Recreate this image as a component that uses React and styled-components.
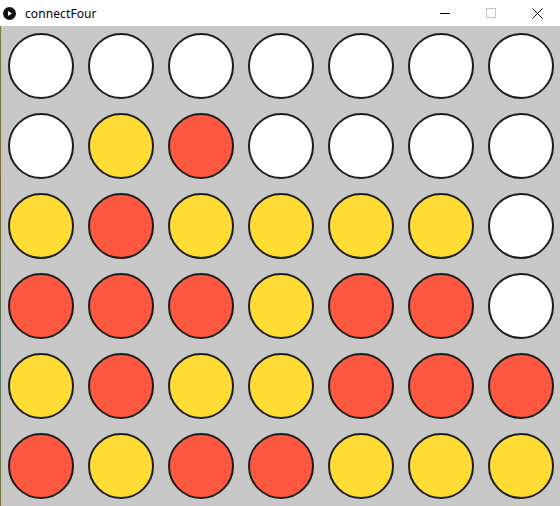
import React from "react";
import styled, { createGlobalStyle } from "styled-components";

const Global = createGlobalStyle`
  html, body { margin: 0; padding: 0; background: #ffffff; overflow: hidden; }
  body { font-family: "Segoe UI", "Noto Sans", "Open Sans", sans-serif; }
`;

const Window = styled.div`
  width: 560px;
  height: 506px;
  display: flex;
  flex-direction: column;
  background: #ffffff;
  overflow: hidden;
`;

const TitleBar = styled.div`
  height: 26px;
  flex: none;
  display: flex;
  align-items: center;
  background: #ffffff;
`;

const AppIcon = styled.svg`
  width: 13px;
  height: 13px;
  margin-left: 3px;
  margin-right: 9px;
  flex: none;
`;

const Title = styled.div`
  font-size: 12px;
  color: #000;
  flex: 1;
  letter-spacing: 0.1px;
`;

const Controls = styled.div`
  display: flex;
  height: 26px;
`;

const CtrlButton = styled.div`
  width: 46px;
  height: 26px;
  display: flex;
  align-items: center;
  justify-content: center;
`;

const Body = styled.div`
  flex: 1;
  display: flex;
`;

const Edge = styled.div`
  width: 1px;
  flex: none;
  background: linear-gradient(#6f7d3c, #7c6a2a 40%, #4f7a6a 70%, #7a7030);
`;

const Canvas = styled.div`
  width: 560px;
  height: 480px;
  flex: none;
  background: #c8c8c8;
  display: grid;
  grid-template-columns: repeat(7, 80px);
  grid-template-rows: repeat(6, 80px);
`;

const Cell = styled.div`
  display: flex;
  align-items: center;
  justify-content: center;
`;

const colors = { W: "#ffffff", Y: "#ffdc33", R: "#ff5841" };

const Disc = styled.div`
  width: 66px;
  height: 66px;
  box-sizing: border-box;
  border-radius: 50%;
  border: 2px solid #1e1e1e;
  background: ${(p) => colors[p.$c]};
`;

const board = [
  "WWWWWWW",
  "WYRWWWW",
  "YRYYYYW",
  "RRRYRRW",
  "YRYYRRR",
  "RYRRYYY",
];

export default function App() {
  return (
    <>
      <Global />
      <Window>
        <TitleBar>
          <AppIcon viewBox="0 0 13 13">
            <circle cx="6.5" cy="6.5" r="6.5" fill="#111" />
            <path d="M5 4 L9 6.5 L5 9 Z" fill="#fff" />
          </AppIcon>
          <Title>connectFour</Title>
          <Controls>
            <CtrlButton>
              <svg width="10" height="10" viewBox="0 0 10 10">
                <path d="M0 5.5 H10" stroke="#000" strokeWidth="1" />
              </svg>
            </CtrlButton>
            <CtrlButton>
              <svg width="10" height="10" viewBox="0 0 10 10">
                <rect x="0.5" y="0.5" width="9" height="9" fill="none" stroke="#c4c4c4" strokeWidth="1" />
              </svg>
            </CtrlButton>
            <CtrlButton>
              <svg width="11" height="11" viewBox="0 0 11 11">
                <path d="M0.5 0.5 L10.5 10.5 M10.5 0.5 L0.5 10.5" stroke="#000" strokeWidth="1" />
              </svg>
            </CtrlButton>
          </Controls>
        </TitleBar>
        <Body>
          <Edge />
          <Canvas>
            {board.map((row, r) =>
              row.split("").map((c, i) => (
                <Cell key={`${r}-${i}`}>
                  <Disc $c={c} />
                </Cell>
              ))
            )}
          </Canvas>
        </Body>
      </Window>
    </>
  );
}
